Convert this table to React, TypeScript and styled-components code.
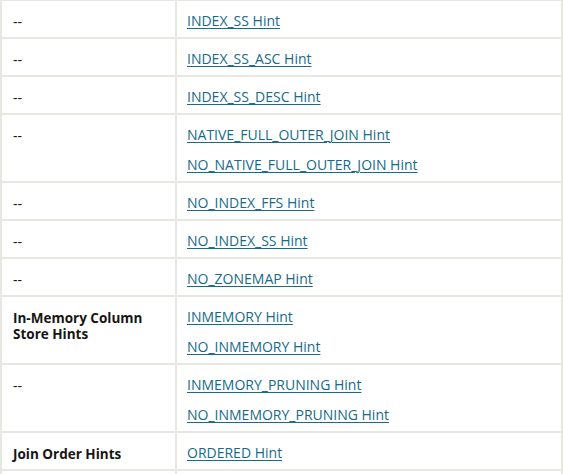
import React from "react";
import styled, { createGlobalStyle } from "styled-components";

const Global = createGlobalStyle`
  html, body { margin: 0; padding: 0; background: #ffffff; }
  body { font-family: "Open Sans", "Noto Sans", sans-serif; }
`;

const Table = styled.table`
  border-collapse: collapse;
  table-layout: fixed;
  width: 563px;
  font-size: 14px;
  color: #161513;
  border-top: 1px solid #e9e7e2;
  border-left: 2px solid #e9e7e2;
  border-right: 2px solid #e9e7e2;
`;

const HeadCol = styled.col`
  width: 175px;
`;

const Row = styled.tr`
  border-bottom: 2px solid #e9e7e2;
`;

const Head = styled.td<{ $bold?: boolean }>`
  vertical-align: top;
  padding: 13px 10px 7px 11px;
  border-right: 2px solid #e9e7e2;
  line-height: 16px;
  font-size: ${(p) => (p.$bold ? "13.5px" : "14px")};
  font-weight: ${(p) => (p.$bold ? 700 : 400)};
`;

const Cell = styled.td`
  vertical-align: top;
  padding: 11px 10px 7px 10px;
`;

const LinkLine = styled.p`
  margin: 0;
  line-height: 18px;
  & + & { margin-top: 12px; }
`;

const Link = styled.a`
  color: #166a8a;
  text-decoration: underline;
  text-underline-offset: 2px;
`;

const rows: { head: string; bold?: boolean; links: string[] }[] = [
  { head: "--", links: ["INDEX_SS Hint"] },
  { head: "--", links: ["INDEX_SS_ASC Hint"] },
  { head: "--", links: ["INDEX_SS_DESC Hint"] },
  { head: "--", links: ["NATIVE_FULL_OUTER_JOIN Hint", "NO_NATIVE_FULL_OUTER_JOIN Hint"] },
  { head: "--", links: ["NO_INDEX_FFS Hint"] },
  { head: "--", links: ["NO_INDEX_SS Hint"] },
  { head: "--", links: ["NO_ZONEMAP Hint"] },
  { head: "In-Memory Column Store Hints", bold: true, links: ["INMEMORY Hint", "NO_INMEMORY Hint"] },
  { head: "--", links: ["INMEMORY_PRUNING Hint", "NO_INMEMORY_PRUNING Hint"] },
  { head: "Join Order Hints", bold: true, links: ["ORDERED Hint"] },
  { head: "", links: [""] },
];

export default function App() {
  return (
    <>
      <Global />
      <Table>
        <colgroup>
          <HeadCol />
          <col />
        </colgroup>
        <tbody>
          {rows.map((r, i) => (
            <Row key={i}>
              <Head $bold={r.bold}>{r.head}</Head>
              <Cell>
                {r.links.map((l, j) => (
                  <LinkLine key={j}>
                    <Link href="#">{l}</Link>
                  </LinkLine>
                ))}
              </Cell>
            </Row>
          ))}
        </tbody>
      </Table>
    </>
  );
}
